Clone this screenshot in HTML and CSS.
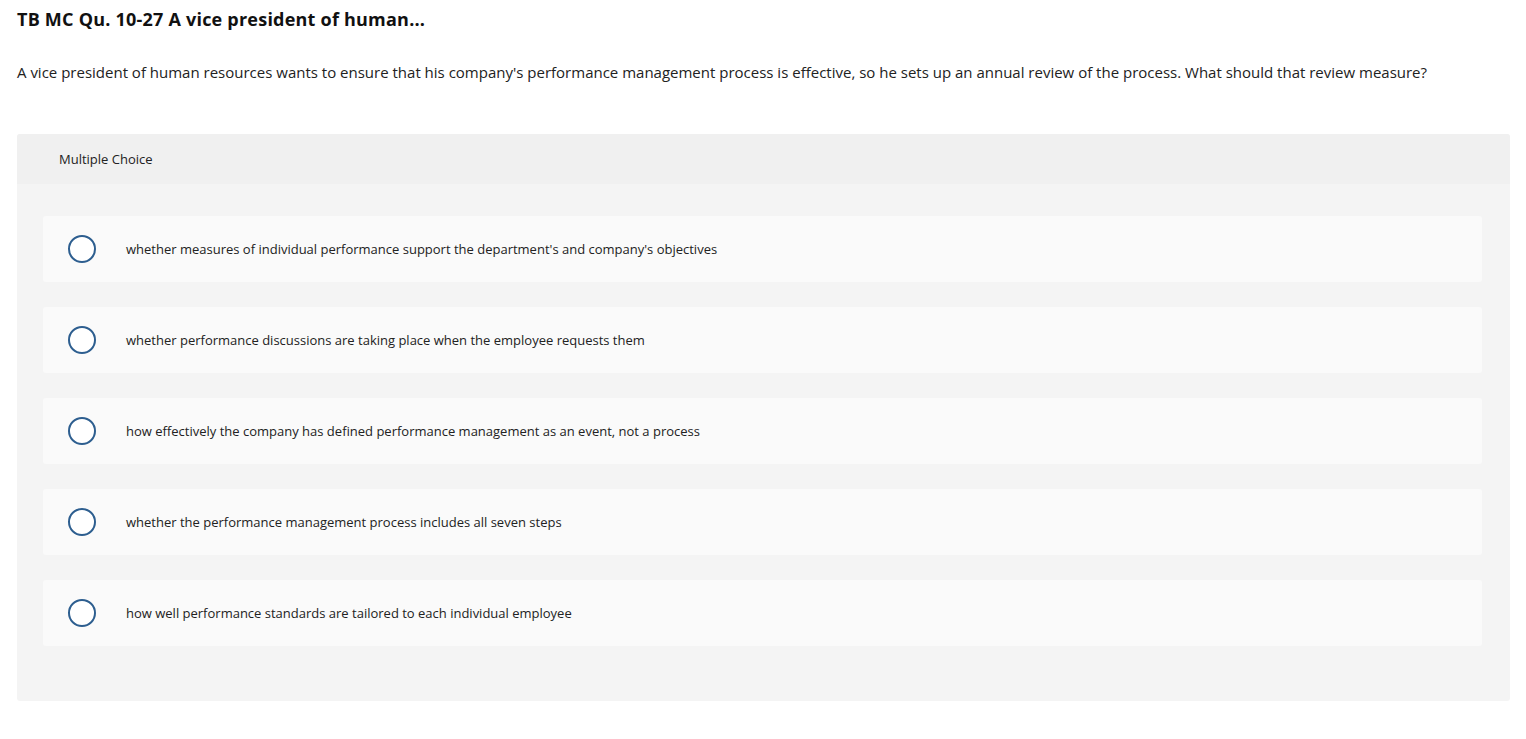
FILE: index.html
```html
<!DOCTYPE html>
<html>
<head>
<meta charset="utf-8">
<link rel="stylesheet" href="styles.css">
</head>
<body>
<div class="page">
  <h1 class="title">TB MC Qu. 10-27 A vice president of human...</h1>
  <p class="question">A vice president of human resources wants to ensure that his company's performance management process is effective, so he sets up an annual review of the process. What should that review measure?</p>
  <div class="card">
    <div class="card-head">Multiple Choice</div>
    <div class="card-body">
      <label class="option"><span class="radio"></span><span class="opt-text">whether measures of individual performance support the department's and company's objectives</span></label>
      <label class="option"><span class="radio"></span><span class="opt-text">whether performance discussions are taking place when the employee requests them</span></label>
      <label class="option"><span class="radio"></span><span class="opt-text">how effectively the company has defined performance management as an event, not a process</span></label>
      <label class="option"><span class="radio"></span><span class="opt-text">whether the performance management process includes all seven steps</span></label>
      <label class="option"><span class="radio"></span><span class="opt-text">how well performance standards are tailored to each individual employee</span></label>
    </div>
  </div>
</div>
</body>
</html>
```
FILE: styles.css
```css
html, body {
  margin: 0;
  padding: 0;
  background: #ffffff;
}
body {
  font-family: "Open Sans", "Liberation Sans", sans-serif;
  color: #1a1a1a;
}
.page {
  padding: 8px 16px 0 17px;
}
.title {
  margin: 0;
  font-size: 18px;
  line-height: 22px;
  font-weight: 700;
  letter-spacing: 0.22px;
  color: #111111;
}
.question {
  margin: 32px 0 0 0;
  font-size: 15px;
  line-height: 20px;
  color: #222222;
}
.card {
  margin-top: 52px;
  border-radius: 3px;
  background: #f4f4f4;
  overflow: hidden;
}
.card-head {
  height: 50px;
  display: flex;
  align-items: center;
  padding-left: 42px;
  background: #f0f0f0;
  font-size: 13px;
  color: #222222;
}
.card-body {
  padding: 32px 28px 55px 26px;
  display: flex;
  flex-direction: column;
  gap: 25px;
}
.option {
  height: 66px;
  display: flex;
  align-items: center;
  background: #fafafa;
  border-radius: 3px;
  padding-left: 25px;
}
.radio {
  width: 24px;
  height: 24px;
  border: 2px solid #2d5e8f;
  border-radius: 50%;
  background: #ffffff;
  flex: none;
}
.opt-text {
  margin-left: 30px;
  font-size: 13px;
  color: #222222;
}
```
